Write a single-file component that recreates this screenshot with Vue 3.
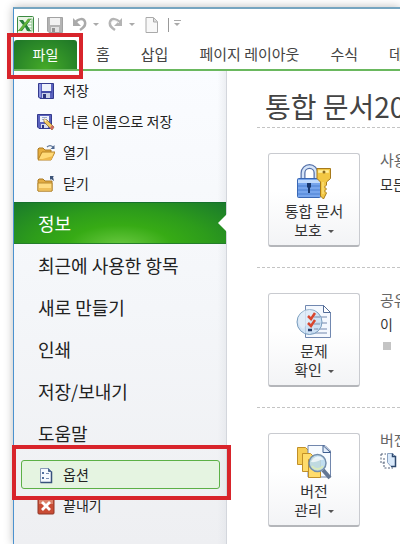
<script setup>
const tabs = ['홈', '삽입', '페이지 레이아웃', '수식', '데']
const fileActions = [
  { label: '저장', icon: 'save' },
  { label: '다른 이름으로 저장', icon: 'saveas' },
  { label: '열기', icon: 'open' },
  { label: '닫기', icon: 'close' }
]
const pages = ['최근에 사용한 항목', '새로 만들기', '인쇄', '저장/보내기', '도움말']
const sections = [
  { id: 'protect', lines: ['통합 문서', '보호'], title: '사용', text: '모든' },
  { id: 'check', lines: ['문제', '확인'], title: '공유', text: '이' },
  { id: 'versions', lines: ['버전', '관리'], title: '버전', text: '' }
]
</script>

<template>
  <div class="page">
    <div class="window">
      <header>
        <div class="quick">
          <svg class="excel" width="17" height="18" viewBox="0 0 17 18" aria-hidden="true">
            <rect x=".5" y=".5" width="16" height="17" rx="1" fill="#e9f4e4" stroke="#3c8a42" />
            <path d="M11 3h4v12h-4" fill="#fff" stroke="#8bc08a" />
            <path d="M11 6h4M11 9h4M11 12h4" stroke="#8bc08a" />
            <path d="M2 4h4l2 3 3-4h3l-4 6 4 6h-4l-2-4-3 4H1l5-6z" fill="#26803a" />
            <path d="M11 3h3L4 15H1z" fill="#65b53c" />
          </svg>
          <i class="bar"></i>
          <button class="tool save" aria-label="저장">
            <svg width="16" height="16" viewBox="0 0 16 16">
              <path d="M.5.5h15v15H2L.5 14z" fill="#b4b4b4" stroke="#a2a2a2" />
              <path d="M3 1h10v7H3z" fill="#f2f2f2" />
              <path d="M4 10h8v5H4z" fill="#e2e2e2" />
              <path d="M5 11h3v4H5z" fill="#929292" />
            </svg>
          </button>
          <button class="tool undo" aria-label="실행 취소">
            <svg width="15" height="15" viewBox="0 0 15 15">
              <path d="M3 6c3-5 9-5 10-1 1 4-2 6-5 8" fill="none" stroke="#aaa" stroke-width="2.5" />
              <path d="M1 1v8h8z" fill="#aaa" />
            </svg>
          </button>
          <i class="caret light"></i>
          <button class="tool redo" aria-label="다시 실행">
            <svg width="15" height="15" viewBox="0 0 15 15">
              <path d="M12 6C9 1 3 1 2 5c-1 4 2 6 5 8" fill="none" stroke="#b4b4b4" stroke-width="2.5" />
              <path d="M14 1v8H6z" fill="#b4b4b4" />
              <path d="M11 6C8 3 4 3 3 6" fill="none" stroke="#eee" />
            </svg>
          </button>
          <i class="caret light"></i>
          <button class="tool new" aria-label="새로 만들기">
            <svg width="13" height="16" viewBox="0 0 13 16">
              <path d="M1 .5h7.500l4 4v11H1z" fill="#f8f8f8" stroke="#aaa" />
              <path d="M8.500 1v4h4" fill="#ddd" stroke="#aaa" />
            </svg>
          </button>
          <i class="bar"></i>
          <i class="caret light lined"></i>
        </div>
        <nav class="tabs">
          <button class="file">파일</button>
          <button v-for="t in tabs" :key="t" class="tab">{{ t }}</button>
        </nav>
      </header>
      <div class="body">
        <nav class="side">
          <button v-for="a in fileActions" :key="a.icon" class="small">
            <svg v-if="a.icon === 'save'" width="18" height="18" viewBox="0 0 18 18">
              <path d="M1.500 1.500h15v15H3L1.500 15z" fill="#5a62be" stroke="#343b8e" />
              <path d="M2 2h2v13H2z" fill="#8b93df" />
              <path d="M5 2h9v7H5z" fill="#eef2fb" />
              <path d="M4 9h11v2H4z" fill="#444ca8" />
              <path d="M5 11h8v5H5z" fill="#c9d0e8" />
              <path d="M6 12h3v4H6z" fill="#2d347e" />
            </svg>
            <svg v-else-if="a.icon === 'saveas'" width="18" height="18" viewBox="0 0 18 18">
              <path d="M.500 1.500h14v14H2L.500 14z" fill="#5a62be" stroke="#343b8e" />
              <path d="M3 3h9v6H3z" fill="#eef2fb" />
              <path d="M5 4.500h5M5 6.500h5" stroke="#9ba9cf" />
              <path d="M4 11h7v4H4z" fill="#d6dcee" />
              <path d="M5 12h2v3H5z" fill="#2d347e" />
              <path d="M7 6l3 1 7 7-2 3-8-8z" fill="#f0c660" stroke="#866536" stroke-width=".8" />
              <path d="M15 12l2 2-2 3-2-2z" fill="#cf6a62" />
              <path d="M7 6l3 1-2 2z" fill="#fff1cc" />
            </svg>
            <svg v-else-if="a.icon === 'open'" width="18" height="18" viewBox="0 0 18 18">
              <path d="M1 15V5l1-1h4l2 2h6v9z" fill="#e6ae3f" stroke="#a97822" />
              <path d="M1 16L5 8h13l-4 8z" fill="#ffda78" stroke="#b78223" />
              <path d="M2 16h12l2-4z" fill="#eeb84b" />
              <path d="M10 3c2-2 4-2 6 0" fill="none" stroke="#61789b" stroke-width="1.200" />
              <path d="M17.500 1v4h-4z" fill="#4b658e" />
            </svg>
            <svg v-else width="18" height="18" viewBox="0 0 18 18">
              <path d="M1 16V5l1-1h4l2 2h7v10z" fill="#e3ac42" stroke="#a97822" />
              <path d="M1 16V8h14v8z" fill="#ffdc83" stroke="#b98a30" />
              <path d="M2 13h12v2.500H2z" fill="#f0bf59" />
              <path d="M13 1h4l-1 1 1 4-3-2-1 1z" fill="#3d5478" />
            </svg>
            <span>{{ a.label }}</span>
          </button>
          <button class="large current" aria-current="page">정보</button>
          <button v-for="p in pages" :key="p" class="large">{{ p }}</button>
          <button class="small option">
            <svg width="18" height="18" viewBox="0 0 18 18">
              <path d="M3.500 2.500h8l3 3v11h-11z" fill="#f5f9ff" stroke="#8a9bb8" />
              <path d="M14.500 5.500v11h-11" fill="none" stroke="#38517c" stroke-width="1.500" />
              <path d="M11.500 2.500v3h3" fill="#49658f" stroke="#49658f" />
              <path d="M5 6h2v2H5zM5 11h2v2H5z" fill="#526f9f" />
              <path d="M9 7.500h3M9 12.500h3" stroke="#7b8fb3" />
            </svg>
            <span>옵션</span>
          </button>
          <button class="small exit">
            <svg width="18" height="18" viewBox="0 0 18 18">
              <rect x="1" y="1" width="16" height="16" rx="1" fill="#c94c35" stroke="#8f3526" />
              <path d="M2 2h14v5H2z" fill="#dc8069" />
              <path d="M5 5l8 8M13 5l-8 8" stroke="#fff" stroke-width="2.800" />
            </svg>
            <span>끝내기</span>
          </button>
        </nav>
        <main>
          <h1>통합 문서20</h1>
          <section v-for="s in sections" :key="s.id">
            <button class="tile">
              <svg v-if="s.id === 'protect'" width="36" height="36" viewBox="0 0 36 36">
                <path d="M7 16V9a6.500 6.500 0 0 1 13 0v7" fill="none" stroke="#5470a8" stroke-width="5" />
                <path d="M7 16V9a6.500 6.500 0 0 1 13 0v7" fill="none" stroke="#d5e4f8" stroke-width="2.500" />
                <rect x="1.500" y="14.500" width="23" height="19" rx="1" fill="#77a5ec" stroke="#3967b4" />
                <path d="M2 16h22v3H2z" fill="#c0dafc" />
                <path d="M2 22h22M2 26h22M2 30h22" stroke="#4c80d2" />
                <path d="M11 19h4v4l-1 1v5h-2v-5l-1-1z" fill="#18376d" />
                <path d="M21 4.500h13.500v10l-4 3.500v3l-2 2 2 2-2 2 2 2-3 6-3-3V18L21 14.500z" fill="#f2c744" stroke="#a77a1c" />
                <path d="M22.500 6.500h10v2h-10zM27 18v12" fill="#fff0a3" stroke="#ffe88b" />
                <circle cx="28" cy="8" r="1.500" fill="#8a691f" />
              </svg>
              <svg v-else-if="s.id === 'check'" width="36" height="36" viewBox="0 0 36 36">
                <path d="M9.500 1.500h18l7 7v25h-25z" fill="#f4f8fe" stroke="#7188b0" />
                <path d="M27.500 1.500v7h7z" fill="#fff" stroke="#536c98" />
                <path d="M20 13h11M20 19h11M20 25h11M15 29h16" stroke="#7387ae" stroke-width="1.200" />
                <circle cx="13.500" cy="18" r="12.500" fill="#c6dcf2" fill-opacity=".8" stroke="#789cbd" />
                <path d="M5 9c4-5 12-5 16 0L7 25C1 21 1 13 5 9z" fill="#fff" opacity=".35" />
                <path d="M12 12l3 3 4-6M12 19l3 3 4-6" fill="none" stroke="#d8462f" stroke-width="2.500" />
                <path d="M12 26h4" stroke="#273d69" stroke-width="2.500" fill="none" />
                <path d="M18 13h6M18 20h6M18 25h4" stroke="#8292af" />
              </svg>
              <svg v-else width="36" height="36" viewBox="0 0 36 36">
                <path d="M1.500 3.500h8l4 4v13h-12z" fill="#f7ce55" stroke="#c18f28" />
                <path d="M12 1.500h17l5.500 5.500v26H12z" fill="#f7fbff" stroke="#7287ad" />
                <path d="M6.500 9.500h8l4 4v14h-12z" fill="#ffdc6c" stroke="#c18f28" />
                <path d="M27 1.500v7h7.500z" fill="#e4eefb" stroke="#3f5e8e" />
                <path d="M12.500 15.500h12v18h-12z" fill="#ffdc6c" stroke="#c18f28" />
                <path d="M27 26l7 8" stroke="#627694" stroke-width="4" />
                <circle cx="21.500" cy="19" r="8.500" fill="#b9d9ed" fill-opacity=".9" stroke="#738daa" stroke-width="1.500" />
                <path d="M15 18c2-6 10-8 13-2-4-1-7 3-13 2z" fill="#fff" opacity=".7" />
                <path d="M16 22c3 4 8 4 11 0" stroke="#d9eabc" stroke-width="2" fill="none" />
              </svg>
              <span>{{ s.lines[0] }}</span>
              <span>{{ s.lines[1] }}<i class="caret"></i></span>
            </button>
            <div class="info">
              <h2>{{ s.title }}</h2>
              <p v-if="s.text">{{ s.text }}</p>
              <i v-if="s.id === 'check'" class="bullet"></i>
              <svg v-if="s.id === 'versions'" width="18" height="18" viewBox="0 0 18 18">
                <path d="M1 2h5M1 2v9h5M4 6v10h9" fill="none" stroke="#526179" stroke-dasharray="2 1.500" />
                <path d="M7.500 1.500h5l3 3v10H11l-3.500-4z" fill="#d9e9fa" stroke="#8ba2c0" />
                <path d="M12.500 1.500v3h3v10H11" fill="none" stroke="#2e496f" stroke-width="1.500" />
              </svg>
            </div>
          </section>
        </main>
      </div>
    </div>
  </div>
</template>

<style>
body {
  margin: 0;
  background: #fff;
}
</style>

<style scoped>
* {
  box-sizing: border-box;
}
.page {
  padding: 7px 0 11px 13px;
  overflow: hidden;
  background: #fff;
  font-family: "Noto Sans CJK KR", sans-serif;
  font-size: 14px;
  color: #333;
}
.window {
  border-top: 2px solid #76a5c0;
  border-left: 1px solid #4b92cf;
  background: #fff;
  box-shadow: 0 0 9px #bbb;
  clip-path: inset(-7px 0 0 -13px);
}
button {
  margin: 0;
  padding: 0;
  border: 0;
  background: none;
  font: inherit;
  color: inherit;
  text-align: left;
  white-space: nowrap;
}
svg {
  display: block;
  flex: none;
}
.quick {
  display: flex;
  align-items: center;
  height: 31px;
  padding-left: 3px;
}
.bar {
  width: 1px;
  height: 14px;
  margin-left: 4px;
  background: #999;
}
.tool {
  margin-left: 8px;
}
.tool.undo {
  margin-left: 9px;
}
.tool.redo {
  margin-left: 9px;
}
.tool.new {
  margin-left: 10px;
  margin-right: 6px;
}
.caret {
  display: inline-block;
  margin-left: 6px;
  border: 3px solid transparent;
  border-top: 3px solid #555;
  border-bottom: 0;
  vertical-align: middle;
}
.caret.light {
  border-top-color: #aaa;
}
.lined {
  position: relative;
  margin-left: 5px;
}
.lined::before {
  content: "";
  position: absolute;
  left: -3px;
  top: -6px;
  width: 7px;
  height: 1px;
  background: #aaa;
}
.tabs {
  display: flex;
  align-items: stretch;
  height: 31px;
  border-bottom: 2px solid #6ab85e;
}
.file,
.tab {
  padding-bottom: 2px;
}
.file {
  position: relative;
  flex: none;
  width: 63px;
  margin-right: 19px;
  border-radius: 3px 3px 0 0;
  background: radial-gradient(ellipse at 50% 100%, #45aa28, #2c8a28 60%, #1d7428);
  color: #fff;
  text-align: center;
}
.file::after,
.option::after {
  content: "";
  position: absolute;
  z-index: 2;
  border: 4px solid #d8242b;
  pointer-events: none;
}
.file::after {
  inset: -7px -6px -10px -7px;
}
.tab {
  margin-right: 31px;
  font-size: 15px;
  color: #444;
}
.body {
  display: flex;
}
.side {
  flex: none;
  display: flex;
  flex-direction: column;
  width: 213px;
  padding: 4px 0 23px;
  border-right: 1px solid #d3d6dc;
  background: linear-gradient(90deg, transparent 96%, #dfe2e780), linear-gradient(#fafcff, #f4f6f9 50%, #eeeff2);
}
.small {
  display: flex;
  align-items: center;
  gap: 8px;
  height: 31px;
  padding-left: 23px;
  color: #222;
}
.small span {
  padding-bottom: 2px;
}
.large {
  height: 42px;
  padding: 0 0 3px 24px;
  font-size: 18px;
  color: #222;
}
.current {
  position: relative;
  margin: 3px 0 1px;
  padding-bottom: 1px;
  border-top: 1px solid #15702c;
  border-bottom: 1px solid #247e2b;
  background: radial-gradient(ellipse at 50% 110%, #6cca43, #37ab15 35%, #2d9c1b 60%, #1a7a2c);
  color: #fff;
}
.current::after {
  content: "";
  position: absolute;
  right: -1px;
  top: 11px;
  border: 9px solid transparent;
  border-right-color: #fff;
  border-left: 0;
}
.option {
  position: relative;
  height: 29px;
  margin: 5px 6px 1px 7px;
  padding-left: 15px;
  border: 1px solid #5cb046;
  border-radius: 3px;
  background: #e5f4e1;
}
.option::after {
  inset: -16px -12px -12px -10px;
}
main {
  flex: 1;
  min-width: 0;
  padding-left: 30px;
}
h1 {
  margin: 0;
  padding: 15px 0 0 8px;
  font-size: 28px;
  font-weight: 400;
  line-height: 41px;
  white-space: nowrap;
  color: #444;
}
section {
  display: flex;
  gap: 20px;
  padding: 25px 0 20px 11px;
  border-top: 1px dashed #c4c4c4;
}
section:last-child {
  padding-bottom: 0;
}
.tile {
  flex: none;
  display: flex;
  flex-direction: column;
  align-items: center;
  width: 92px;
  height: 94px;
  padding-top: 10px;
  border: 1px solid #c9cbd0;
  border-bottom: 2px solid #b4b6ba;
  border-radius: 3px;
  background: linear-gradient(#fff 40%, #f3f4f6);
  font-size: 15px;
  line-height: 19px;
}
.tile svg {
  margin-bottom: 1px;
}
h2,
p {
  margin: 0;
  font-size: 15px;
  font-weight: 400;
  line-height: 24px;
  white-space: nowrap;
}
.info {
  margin-top: -5px;
}
h2 {
  color: #666;
}
p {
  font-size: 14px;
}
.bullet {
  display: block;
  width: 8px;
  height: 8px;
  margin: 6px 0 0 3px;
  background: #c4c4c4;
}
</style>
